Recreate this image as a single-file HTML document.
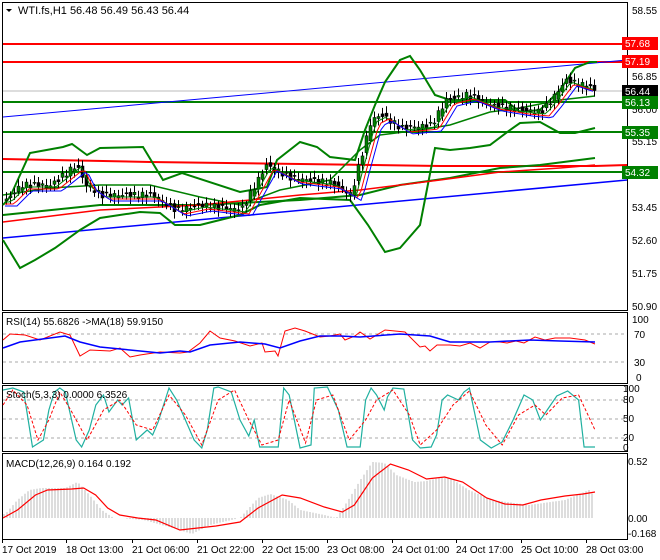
<!DOCTYPE html>
<html><head><meta charset="utf-8"><style>
body{margin:0;background:#fff;}
svg{display:block;font-family:"Liberation Sans",sans-serif;font-size:10px;}
</style></head><body>
<svg id="s" width="660" height="560" viewBox="0 0 660 560">
<rect x="0" y="0" width="660" height="560" fill="#fff"/>
<rect x="2.5" y="2.5" width="625" height="308" fill="none" stroke="#000"/>
<rect x="2.5" y="312.5" width="625" height="71" fill="none" stroke="#000"/>
<rect x="2.5" y="385.5" width="625" height="66" fill="none" stroke="#000"/>
<rect x="2.5" y="453.5" width="625" height="86" fill="none" stroke="#000"/>
<g id="main"></g>
<g id="ind"></g>
<path d="M6 9 L12 9 L9 12 Z" fill="#000"/>
<text x="18" y="14" font-size="11">WTI.fs,H1  56.48 56.49 56.43 56.44</text>
<text x="6" y="325">RSI(14) 55.6826  -&gt;MA(18) 59.9150</text>
<text x="6" y="398">Stoch(5,3,3) 0.0000 6.3526</text>
<text x="6" y="467">MACD(12,26,9) 0.164 0.192</text>
<g font-size="10">
<text x="632" y="14">58.55</text>
<text x="632" y="80">56.85</text>
<text x="632" y="113">56.00</text>
<text x="632" y="145">55.15</text>
<text x="632" y="211">53.45</text>
<text x="632" y="244">52.60</text>
<text x="632" y="277">51.75</text>
<text x="632" y="310">50.90</text>
<rect x="622" y="37" width="36" height="13" fill="#f00"/><text x="625" y="47" fill="#fff">57.68</text>
<rect x="622" y="55" width="36" height="13" fill="#f00"/><text x="625" y="65" fill="#fff">57.19</text>
<rect x="622" y="85" width="36" height="13" fill="#000"/><text x="625" y="95" fill="#fff">56.44</text>
<rect x="622" y="96" width="36" height="13" fill="#008000"/><text x="625" y="106" fill="#fff">56.13</text>
<rect x="622" y="126" width="36" height="13" fill="#008000"/><text x="625" y="136" fill="#fff">55.35</text>
<rect x="622" y="166" width="36" height="13" fill="#008000"/><text x="625" y="176" fill="#fff">54.32</text>
<text x="632" y="323">100</text><text x="634" y="338">70</text><text x="634" y="366">30</text><text x="636" y="381">0</text>
<text x="623" y="392">100</text><text x="623" y="403">80</text><text x="623" y="422">50</text><text x="623" y="441">20</text><text x="623" y="451">0</text>
<text x="628" y="465">0.52</text><text x="628" y="522">0.00</text><text x="628" y="537">-0.168</text>
</g>
<g font-size="10" id="tx"></g>
</svg>
<script>
var NS="http://www.w3.org/2000/svg";
function el(p,t,a){var e=document.createElementNS(NS,t);for(var k in a)e.setAttribute(k,a[k]);document.getElementById(p).appendChild(e);return e;}
function pl(p,pts,c,w,d){var a={points:pts.map(function(q){return q.join(",")}).join(" "),fill:"none",stroke:c,"stroke-width":w||1};if(d)a["stroke-dasharray"]=d;return el(p,"polyline",a);}
function sc(pts,f){return pts.map(function(q){return [3+(q[0]-3)*f,q[1]];});}
function interp(k,x){if(x<=k[0][0])return k[0][1];for(var i=0;i<k.length-1;i++){if(x>=k[i][0]&&x<=k[i+1][0]){var t=(x-k[i][0])/(k[i+1][0]-k[i][0]);return k[i][1]+t*(k[i+1][1]-k[i][1]);}}return k[k.length-1][1];}
pl("main",[[3,91],[627,91]],"#bbb",1);
pl("main",[[3,44],[627,44]],"#f00",2);
pl("main",[[3,62],[627,62]],"#f00",2);
pl("main",[[3,102],[627,102]],"#008000",2);
pl("main",[[3,132],[627,132]],"#008000",2);
pl("main",[[3,172],[627,172]],"#008000",2);
pl("main",[[3,117],[627,60]],"#00f",1);
pl("main",[[3,238],[627,180]],"#00f",1.5);
pl("main",[[3,159],[150,162],[300,164],[440,166],[595,166],[627,165]],"#f00",2);
pl("main",[[3,205],[10,197],[30,153],[63,147],[72,144],[87,155],[100,148],[143,147],[163,180],[182,173],[240,192],[267,187],[277,160],[300,142],[317,147],[330,157],[355,160],[365,130],[375,105],[385,82],[400,60],[410,56],[420,70],[435,95],[450,100],[470,100],[490,100],[505,100],[520,112],[540,110],[560,90],[575,68],[590,62],[597,62]],"#008000",2);
pl("main",[[3,240],[20,268],[35,260],[55,248],[80,230],[100,218],[140,212],[160,213],[175,225],[200,225],[240,215],[260,205],[300,198],[350,200],[368,225],[385,252],[400,248],[420,225],[435,148],[450,150],[470,148],[490,145],[510,130],[520,123],[540,122],[560,133],[575,133],[595,128]],"#008000",2);
pl("main",[[3,195],[50,188],[100,185],[150,185],[200,197],[240,205],[280,190],[330,180],[360,150],[380,135],[420,130],[450,125],[490,112],[520,108],[560,100],[595,96]],"#008000",1.5);
pl("main",[[3,215],[100,205],[200,205],[300,200],[360,195],[400,185],[450,178],[500,168],[540,165],[595,158]],"#008000",2);
pl("main",[[3,222],[100,210],[200,205],[300,195],[360,190],[440,180],[500,172],[560,168],[595,165]],"#f00",1.5);
var K=[[5,200],[20,185],[50,185],[75,165],[85,185],[100,195],[150,195],[175,210],[200,205],[240,210],[265,165],[290,178],[330,183],[350,195],[355,175],[370,120],[380,115],[400,128],[430,125],[445,100],[465,95],[490,105],[520,110],[540,112],[550,100],[565,80],[580,85],[595,90]];
var ma1=[],ma2=[],ma3=[];
for(var x=5;x<=595;x+=4){var y0=interp(K,x-4)+Math.sin(x*1.3)*3,y1=interp(K,x)+Math.sin(x*0.7)*3;
var hi=Math.min(y0,y1)-3-Math.abs(Math.sin(x))*4,lo=Math.max(y0,y1)+3+Math.abs(Math.cos(x))*4;
el("main","line",{x1:x+1.5,y1:hi,x2:x+1.5,y2:lo,stroke:"#000","stroke-width":1});
var up=y1<y0;el("main","rect",{x:x,y:Math.min(y0,y1),width:3,height:Math.max(1,Math.abs(y1-y0)),fill:up?"#008000":"#000",stroke:"#000","stroke-width":0.5});
ma1.push([x,interp(K,x-6)+2]);ma2.push([x,interp(K,x-9)+4]);ma3.push([x,interp(K,x-12)+6]);}
pl("main",ma1,"#008000",1);pl("main",ma2,"#f00",1);pl("main",ma3,"#00f",1);
[[334],[362]].forEach(function(v){pl("ind",[[3,v[0]],[627,v[0]]],"#aaa",1,"3,3");});
pl("ind",[[3,340],[10,334],[25,335],[40,340],[60,332],[70,335],[80,356],[90,350],[110,351],[120,348],[130,357],[140,355],[160,352],[180,353],[188,352],[200,343],[210,331],[220,338],[235,341],[250,346],[262,343],[265,352],[275,351],[278,356],[285,331],[295,328],[305,331],[320,337],[330,336],[340,334],[345,340],[355,336],[360,332],[370,339],[385,330],[395,331],[405,332],[420,347],[425,346],[430,351],[437,345],[450,345],[460,346],[470,343],[480,348],[490,342],[500,342],[507,343],[516,341],[524,343],[535,337],[545,340],[555,338],[570,338],[585,340],[595,344]],"#f00",1);
pl("ind",[[3,348],[20,342],[50,338],[65,336],[80,342],[100,347],[130,350],[160,353],[180,351],[190,352],[210,345],[240,342],[265,344],[280,348],[300,341],[320,336],[340,336],[360,337],[400,334],[430,336],[450,342],[470,342],[490,342],[510,341],[530,340],[560,341],[595,342]],"#00f",1.5);
[[400],[419],[438]].forEach(function(v){pl("ind",[[3,v[0]],[627,v[0]]],"#aaa",1,"3,3");});
var sf=592/542;
pl("ind",sc([[3,390],[12,388],[22,392],[30,447],[40,440],[45,410],[50,392],[55,388],[60,392],[70,440],[75,447],[82,430],[88,405],[95,395],[100,412],[108,400],[112,405],[118,398],[125,440],[135,430],[140,435],[145,422],[155,388],[162,400],[170,420],[178,440],[185,448],[190,430],[196,388],[200,387],[212,392],[220,420],[228,436],[233,420],[238,447],[255,447],[260,388],[265,395],[275,448],[285,445],[288,388],[300,387],[310,410],[318,447],[330,447],[335,400],[340,388],[345,395],[352,410],[355,397],[360,388],[370,389],[378,440],[385,448],[395,447],[400,435],[405,400],[410,395],[420,400],[425,392],[430,388],[440,440],[450,448],[460,442],[470,420],[480,395],[488,400],[495,420],[500,412],[510,396],[520,391],[530,400],[535,447],[545,447]],sf),"#20b0a0",1.2);
pl("ind",sc([[3,405],[12,390],[25,405],[35,440],[45,420],[55,392],[65,410],[80,440],[95,410],[110,400],[125,425],[140,430],[155,395],[170,415],[185,445],[200,400],[215,390],[228,420],[240,445],[255,440],[265,400],[280,443],[290,400],[305,395],[320,440],[335,420],[345,400],[360,390],[375,415],[385,445],[400,430],[415,405],[430,391],[445,425],[460,445],[475,415],[490,405],[500,415],[515,398],[530,395],[545,430]],sf),"#f00",1,"3,2");
var mf=592/492;
var H=sc([[5,514],[15,500],[25,490],[35,488],[55,488],[65,482],[75,495],[85,510],[95,518],[100,518],[120,520],[150,530],[160,534],[175,525],[200,518],[215,498],[225,494],[240,500],[250,510],[270,515],[280,518],[290,500],[300,480],[310,462],[320,463],[330,475],[345,482],[355,481],[365,478],[375,478],[390,490],[410,500],[440,505],[470,500],[490,490],[495,497]],mf);
for(var x=4;x<=594;x+=3){var hy=interp(H,x);if(Math.abs(hy-518)>0.5)el("ind","line",{x1:x,y1:518,x2:x,y2:hy,stroke:"#bbb","stroke-width":1});}
pl("ind",sc([[3,518],[15,510],[30,495],[40,490],[60,489],[70,488],[80,495],[90,508],[100,515],[115,518],[130,520],[150,530],[165,528],[180,526],[200,522],[215,508],[235,495],[250,498],[270,507],[285,512],[295,505],[310,478],[325,464],[340,470],[355,479],[370,477],[385,482],[405,498],[420,504],[435,505],[450,500],[470,496],[485,494],[495,492]],mf),"#f00",1.2);
var T=[[2,"17 Oct 2019"],[66,"18 Oct 13:00"],[132,"21 Oct 06:00"],[197,"21 Oct 22:00"],[262,"22 Oct 15:00"],[327,"23 Oct 08:00"],[392,"24 Oct 01:00"],[456,"24 Oct 17:00"],[521,"25 Oct 10:00"],[586,"28 Oct 03:00"]];
T.forEach(function(t){var e=el("tx","text",{x:t[0],y:553});e.textContent=t[1];el("tx","line",{x1:t[0]+0.5,y1:539,x2:t[0]+0.5,y2:543,stroke:"#000"});});
</script>
</body></html>
